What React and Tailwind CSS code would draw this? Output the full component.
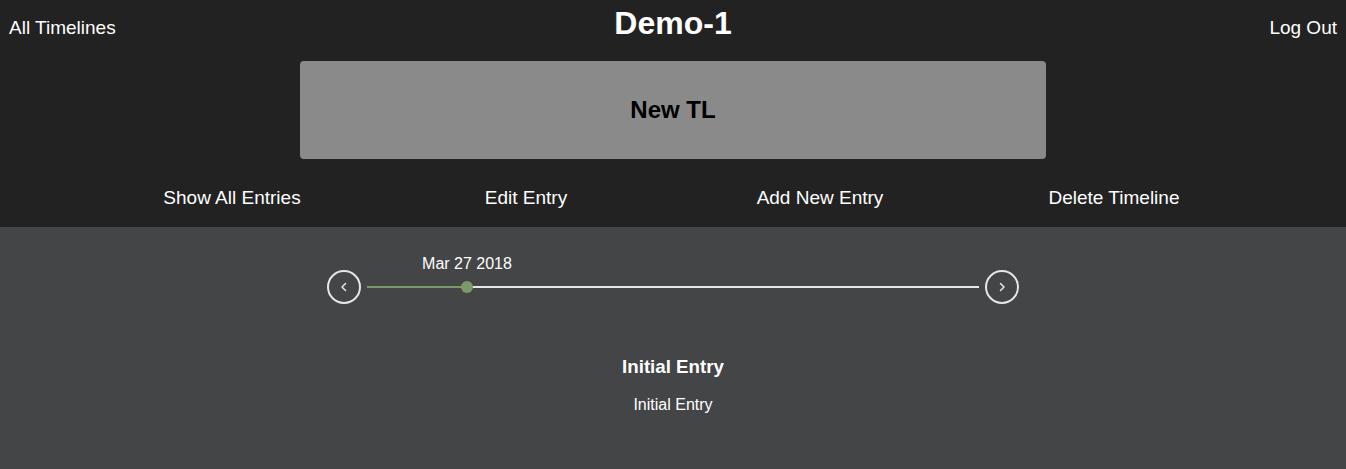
import React from "react";

const ChevronLeft = () => (
    <svg width="14" height="14" viewBox="0 0 14 14" fill="none">
        <path d="M8.5 3.5 L5 7 L8.5 10.5" stroke="#e6e6e6" strokeWidth="1.5" strokeLinecap="round" strokeLinejoin="round" />
    </svg>
);

const ChevronRight = () => (
    <svg width="14" height="14" viewBox="0 0 14 14" fill="none">
        <path d="M5.5 3.5 L9 7 L5.5 10.5" stroke="#e6e6e6" strokeWidth="1.5" strokeLinecap="round" strokeLinejoin="round" />
    </svg>
);

const navItems = ["Show All Entries", "Edit Entry", "Add New Entry", "Delete Timeline"];

export default function App() {
    return (
        <div className="w-[1346px] h-[469px] flex flex-col font-['Liberation_Sans',Arial,sans-serif]">

            <div className="bg-[#222222] h-[227px] text-white">
                <div className="grid grid-cols-[1fr_auto_1fr] px-[9px] pt-[4px]">
                    <div className="pt-[13px] text-[19px] leading-[22px]">All Timelines</div>
                    <h1 className="text-[32px] leading-[38px] font-bold">Demo-1</h1>
                    <div className="pt-[13px] text-[19px] leading-[22px] text-right">Log Out</div>
                </div>

                <div className="mt-[19px] mx-auto w-[746px] h-[98px] bg-[#8a8a8a] rounded-[4px] flex items-center justify-center">
                    <span className="text-black text-[24px] font-bold leading-[28px]">New TL</span>
                </div>

                <div className="mt-[28px] mx-auto w-[1176px] grid grid-cols-4 text-center text-[19px] leading-[22px]">
                    {navItems.map((n) => (
                        <div key={n}>{n}</div>
                    ))}
                </div>
            </div>

            <div className="flex-1 bg-[#444547] text-white">
                <div className="mt-[26px] mx-auto w-[692px] flex items-center relative pt-[17px]">
                    <button className="w-[34px] h-[34px] rounded-full border-2 border-[#e6e6e6] flex items-center justify-center">
                        <ChevronLeft />
                    </button>
                    <div className="flex-1 mx-[6px] flex items-center relative">
                        <div className="w-[100px] h-[2px] bg-[#7a9a6a]" />
                        <div className="flex-1 h-[2px] bg-[#e6e6e6]" />
                        <div className="absolute left-[94px] w-[12px] h-[12px] rounded-full bg-[#7a9a6a]" />
                        <div className="absolute left-[100px] -translate-x-1/2 -top-[32px] text-[16px] leading-[19px] whitespace-nowrap">
                            Mar 27 2018
                        </div>
                    </div>
                    <button className="w-[34px] h-[34px] rounded-full border-2 border-[#e6e6e6] flex items-center justify-center">
                        <ChevronRight />
                    </button>
                </div>

                <div className="mt-[52px] text-center">
                    <h3 className="text-[18.72px] leading-[22px] font-bold">Initial Entry</h3>
                    <p className="mt-[17px] text-[16px] leading-[19px]">Initial Entry</p>
                </div>
            </div>
        </div>
    );
}
